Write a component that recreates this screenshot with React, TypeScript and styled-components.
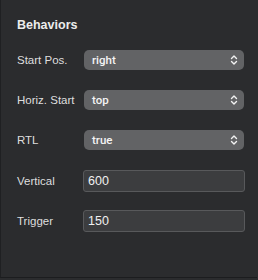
import React, { FC } from 'react';
import styled, { createGlobalStyle } from 'styled-components';

const GlobalStyle = createGlobalStyle`
  html, body {
    margin: 0;
    padding: 0;
    background: #2b2c2e;
  }
  body {
    font-family: "Liberation Sans", Arial, sans-serif;
    -webkit-font-smoothing: antialiased;
  }
`;

const Panel = styled.div`
  width: 257px;
  height: 278px;
  background: #2b2c2e;
  border-left: 1px solid #1f2022;
  border-bottom: 1px solid #1c1d1f;
  padding: 18px 0 0 16px;
  box-sizing: border-box;
`;

const Heading = styled.h3`
  margin: 0 0 18px;
  font-size: 12.5px;
  font-weight: 700;
  line-height: 14px;
  color: #ececec;
`;

const Rows = styled.div`
  display: flex;
  flex-direction: column;
  gap: 20px;
`;

const Row = styled.div`
  display: grid;
  grid-template-columns: 67px 160px;
  align-items: center;
  height: 20px;
`;

const Label = styled.span`
  font-size: 11.5px;
  color: #dedede;
`;

const SelectBox = styled.div`
  display: flex;
  align-items: center;
  justify-content: space-between;
  height: 20px;
  padding: 0 6px 0 8px;
  border-radius: 5px;
  background: #626365;
  color: #f4f4f4;
  font-family: Roboto, "Liberation Sans", sans-serif;
  font-size: 11.5px;
  font-weight: 500;
  box-sizing: border-box;
`;

const InputBox = styled.div`
  display: flex;
  align-items: center;
  height: 22px;
  width: 162px;
  margin-left: -1px;
  padding: 0 4px;
  border: 1px solid #58595b;
  border-radius: 3px;
  background: #3c3d3f;
  color: #f0f0f0;
  font-size: 12.5px;
  box-sizing: border-box;
`;

const Chevrons: FC = () => (
  <svg width="8" height="12" viewBox="0 0 8 12" fill="none">
    <path d="M1.5 4.5 L4 2 L6.5 4.5" stroke="#f2f2f2" strokeWidth="1.4" strokeLinecap="round" strokeLinejoin="round" />
    <path d="M1.5 7.5 L4 10 L6.5 7.5" stroke="#f2f2f2" strokeWidth="1.4" strokeLinecap="round" strokeLinejoin="round" />
  </svg>
);

const selects = [
  { label: 'Start Pos.', value: 'right' },
  { label: 'Horiz. Start', value: 'top' },
  { label: 'RTL', value: 'true' },
];

const inputs = [
  { label: 'Vertical', value: '600' },
  { label: 'Trigger', value: '150' },
];

const App: FC = () => {
  return (
    <>
      <GlobalStyle />
      <Panel>
        <Heading>Behaviors</Heading>
        <Rows>
          {selects.map(s => (
            <Row key={s.label}>
              <Label>{s.label}</Label>
              <SelectBox>
                {s.value}
                <Chevrons />
              </SelectBox>
            </Row>
          ))}
          {inputs.map(i => (
            <Row key={i.label}>
              <Label>{i.label}</Label>
              <InputBox>{i.value}</InputBox>
            </Row>
          ))}
        </Rows>
      </Panel>
    </>
  );
};

export default App;
